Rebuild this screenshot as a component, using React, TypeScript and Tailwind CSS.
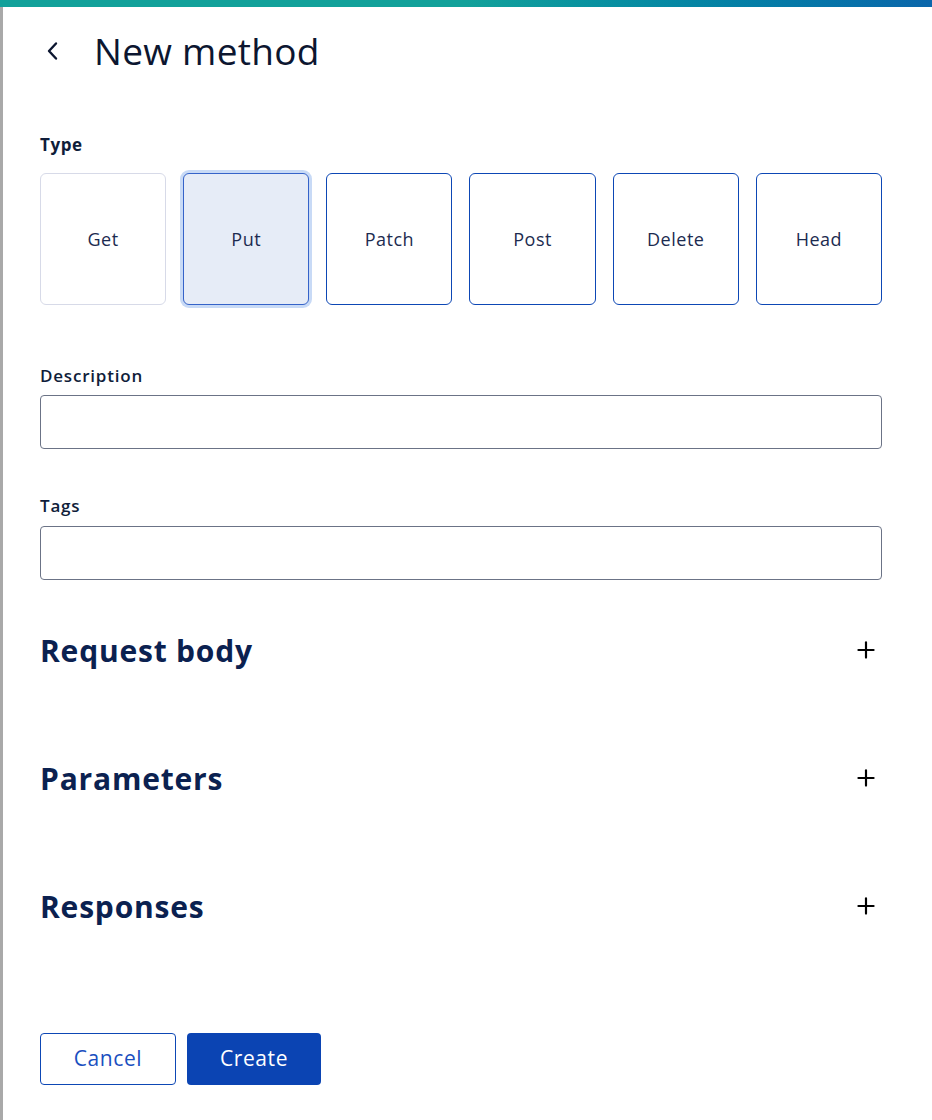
import { Plus } from "lucide-react"

const types = ["Get", "Put", "Patch", "Post", "Delete", "Head"]

function TypeButton({ label }: { label: string }) {
  if (label === "Get") {
    return (
      <button className="h-[132px] rounded-[6px] border border-[#d7dae8] bg-white text-[18px] tracking-[0.5px] text-[#1c2b50]">
        {label}
      </button>
    )
  }
  if (label === "Put") {
    return (
      <button className="h-[132px] rounded-[6px] border border-[#3563c9] bg-[#e6ecf7] text-[18px] tracking-[0.5px] text-[#1c2b50] ring-[3px] ring-[#c8daf6]">
        {label}
      </button>
    )
  }
  return (
    <button className="h-[132px] rounded-[6px] border border-[#0d47b5] bg-white text-[18px] tracking-[0.5px] text-[#1c2b50]">
      {label}
    </button>
  )
}

function Section({ title }: { title: string }) {
  return (
    <div className="flex h-[48px] items-center justify-between">
      <h2 className="text-[30px] font-bold tracking-[0.8px] text-[#0b2150]">{title}</h2>
      <Plus className="mr-[3px] h-[26px] w-[26px] text-black" strokeWidth={2} />
    </div>
  )
}

export default function App() {
  return (
    <div className="min-h-[1120px] bg-white" style={{ fontFamily: '"Open Sans", "Noto Sans", sans-serif' }}>
      {/* top accent bar */}
      <div className="h-[7px] bg-gradient-to-r from-[#12a19a] via-[#12a19a] to-[#0b66ab]" />

      <div className="flex min-h-[1113px]">
        <div className="w-[3px] bg-[#a9a9a9]" />

        <div className="flex-1 pl-[37px] pr-[50px]">
          {/* Header */}
          <div className="flex h-[88px] items-center">
            <button className="flex h-[24px] w-[24px] items-center justify-center">
              <svg width="14" height="20" viewBox="0 0 14 20" fill="none">
                <path d="M11 2.5 L4 10 L11 17.5" stroke="#0c1630" strokeWidth="2.4" strokeLinecap="round" strokeLinejoin="round" />
              </svg>
            </button>
            <h1 className="ml-[30px] text-[37px] font-medium tracking-[0.3px] text-[#0c1630]">New method</h1>
          </div>

          {/* Type */}
          <p className="mt-[38px] text-[17px] font-bold leading-[24px] tracking-[0.6px] text-[#0f1d3a]">Type</p>
          <div className="mt-[16px] grid grid-cols-6 gap-[17px]">
            {types.map((t) => (
              <TypeButton key={t} label={t} />
            ))}
          </div>

          {/* Description */}
          <label className="mt-[59px] block text-[17px] font-semibold leading-[24px] tracking-[0.8px] text-[#0f1d3a]">
            Description
          </label>
          <input className="mt-[7px] block h-[54px] w-full rounded-[4px] border border-[#6b7386] px-3 outline-none" />

          {/* Tags */}
          <label className="mt-[45px] block text-[17px] font-semibold leading-[24px] tracking-[0.8px] text-[#0f1d3a]">
            Tags
          </label>
          <input className="mt-[8px] block h-[54px] w-full rounded-[4px] border border-[#6b7386] px-3 outline-none" />

          {/* Sections */}
          <div className="mt-[46px] flex flex-col gap-[80px]">
            <Section title="Request body" />
            <Section title="Parameters" />
            <Section title="Responses" />
          </div>

          {/* Actions */}
          <div className="mt-[103px] flex gap-[11px]">
            <button className="h-[52px] w-[136px] rounded-[4px] border border-[#0d47b5] bg-white text-[21px] tracking-[0.6px] text-[#1a4fc0]">
              Cancel
            </button>
            <button className="h-[52px] w-[134px] rounded-[4px] bg-[#0b44b3] text-[21px] tracking-[0.6px] text-white">
              Create
            </button>
          </div>
        </div>
      </div>
    </div>
  )
}
